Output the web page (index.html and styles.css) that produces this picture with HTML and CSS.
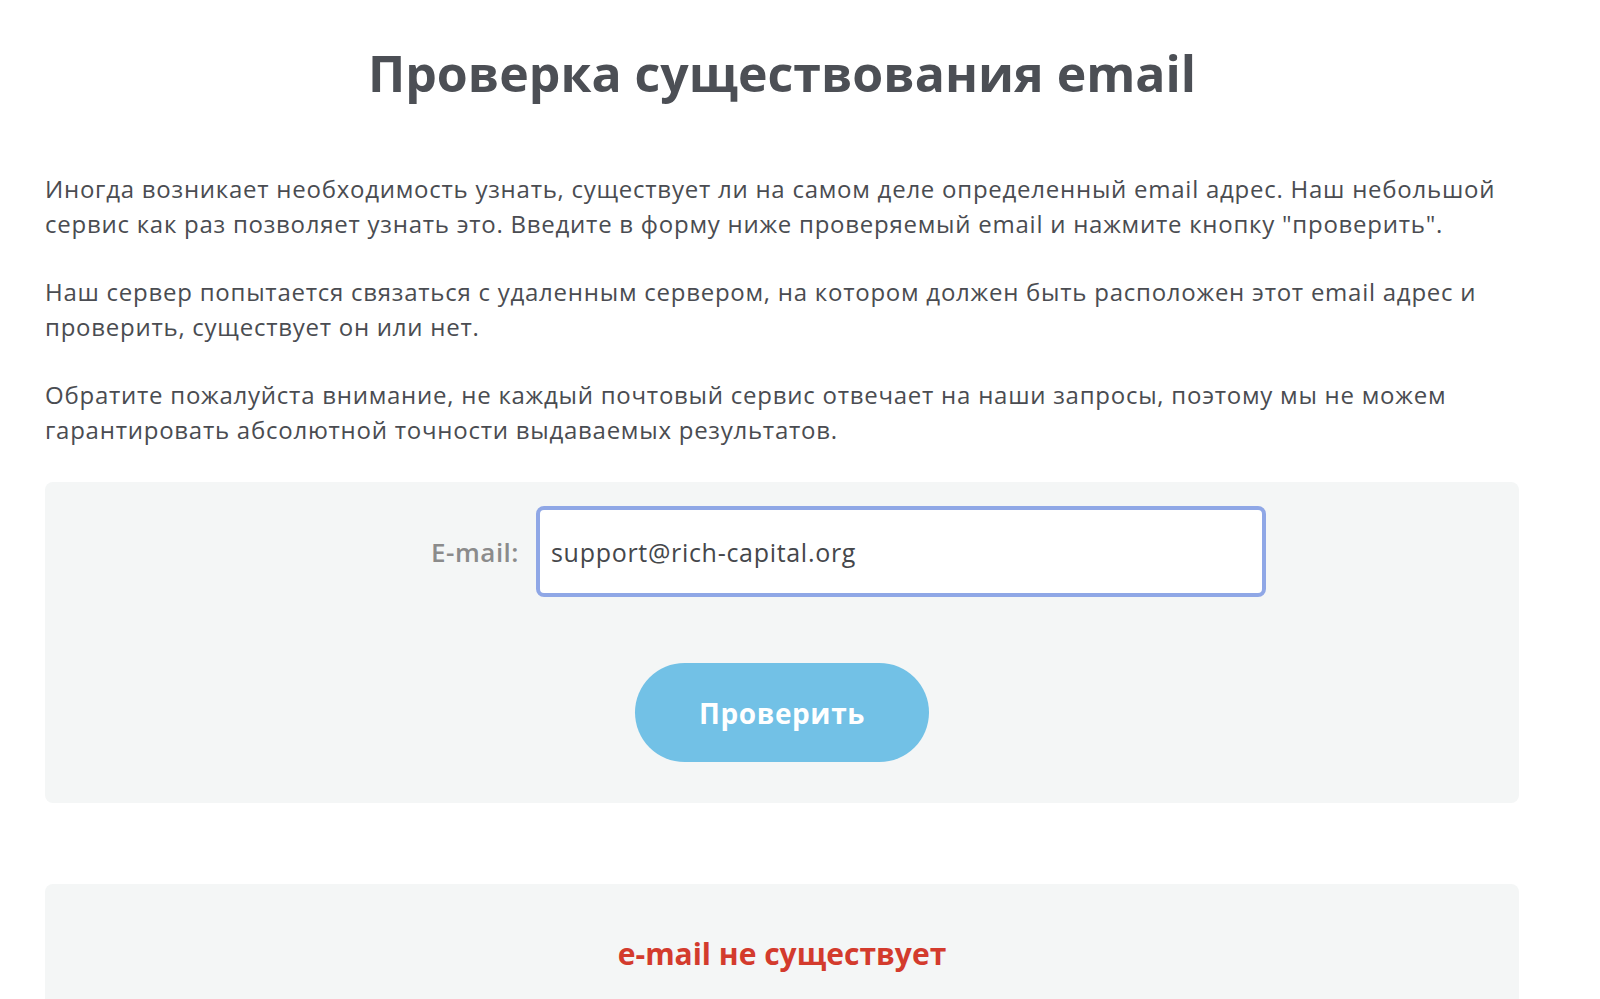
FILE: index.html
```html
<!DOCTYPE html>
<html lang="ru">
<head>
    <meta charset="UTF-8">
    <meta name="viewport" content="width=device-width, initial-scale=1.0">
    <title>Проверка существования email</title>
    <link rel="stylesheet" href="styles.css">
</head>
<body>
    <div class="page">
        <h1 class="page-title">Проверка существования email</h1>
        <p class="intro">Иногда возникает необходимость узнать, существует ли на самом деле определенный email адрес. Наш небольшой сервис как раз позволяет узнать это. Введите в форму ниже проверяемый email и нажмите кнопку "проверить".</p>
        <p class="intro">Наш сервер попытается связаться с удаленным сервером, на котором должен быть расположен этот email адрес и проверить, существует он или нет.</p>
        <p class="intro">Обратите пожалуйста внимание, не каждый почтовый сервис отвечает на наши запросы, поэтому мы не можем гарантировать абсолютной точности выдаваемых результатов.</p>

        <form class="check-form" onsubmit="return false;">
            <div class="form-row">
                <label class="form-label" for="email">E-mail:</label>
                <input class="form-input" type="text" id="email" value="support@rich-capital.org">
            </div>
            <button class="check-btn" type="submit">Проверить</button>
        </form>

        <div class="result">
            <div class="result-text">e-mail не существует</div>
        </div>
    </div>
</body>
</html>
```

FILE: styles.css
```css
body, html {
    margin: 0;
    padding: 0;
    background-color: #ffffff;
    font-family: "Open Sans", Arial, sans-serif;
    color: #4a4c51;
}
.page {
    padding: 0 81px 0 45px;
}
.page-title {
    margin: 0;
    padding-top: 43px;
    font-size: 50px;
    line-height: 60px;
    font-weight: 700;
    text-align: center;
    color: #4c4f55;
}
.intro {
    margin: 0 0 33px;
    font-size: 24px;
    font-weight: 500;
    line-height: 35px;
    letter-spacing: 0.75px;
}
.page-title + .intro {
    margin-top: 68px;
}
.check-form {
    margin-top: 35px;
    padding: 24px 0 41px;
    background-color: #f4f6f6;
    border-radius: 8px;
}
.form-row {
    display: flex;
    align-items: center;
}
.form-label {
    flex: 0 0 474px;
    margin-right: 17px;
    text-align: right;
    font-size: 26px;
    font-weight: 600;
    letter-spacing: 0.5px;
    color: #8b8b8b;
}
.form-input {
    box-sizing: border-box;
    width: 730px;
    height: 91px;
    padding: 0 11px;
    border: 4px solid #8fa7e6;
    border-radius: 8px;
    background: #ffffff;
    font-family: "Open Sans", Arial, sans-serif;
    font-size: 25px;
    font-weight: 500;
    letter-spacing: 0.7px;
    color: #45474b;
    outline: none;
}
.check-btn {
    display: block;
    width: 294px;
    height: 99px;
    margin: 66px auto 0;
    border: none;
    border-radius: 50px;
    background-color: #72c1e6;
    color: #ffffff;
    font-family: "Open Sans", Arial, sans-serif;
    font-size: 28px;
    font-weight: 700;
    letter-spacing: 0.6px;
    cursor: pointer;
}
.result {
    margin-top: 81px;
    min-height: 200px;
    padding-top: 50px;
    background-color: #f4f6f6;
    border-radius: 8px;
}
.result-text {
    font-size: 30px;
    line-height: 40px;
    font-weight: 700;
    text-align: center;
    color: #d33b2d;
}
```
